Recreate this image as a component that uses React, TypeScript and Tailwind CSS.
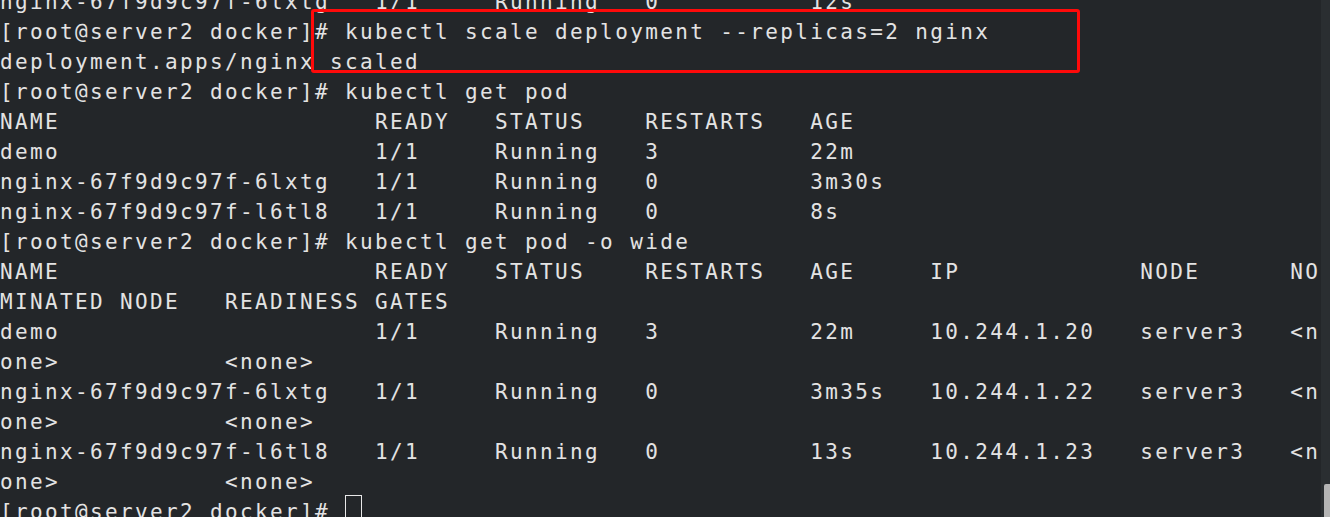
import React from "react";

const PROMPT = "[root@server2 docker]# ";

function row(cols: Array<[string, number]>) {
  // each entry: text, column width
  return cols.map(([t, w]) => (w > 0 ? t.padEnd(w, " ") : t)).join("");
}

const podRow = (name: string, restarts: string, age: string) =>
  row([
    [name, 25],
    ["1/1", 8],
    ["Running", 10],
    [restarts, 11],
    [age, 0],
  ]);

const wideRow = (name: string, restarts: string, age: string, ip: string) =>
  row([
    [name, 25],
    ["1/1", 8],
    ["Running", 10],
    [restarts, 11],
    [age, 8],
    [ip, 14],
    ["server3", 10],
    ["<n", 0],
  ]);

const lines: string[] = [
  podRow("nginx-67f9d9c97f-6lxtg", "0", "12s"),
  PROMPT + "kubectl scale deployment --replicas=2 nginx",
  "deployment.apps/nginx scaled",
  PROMPT + "kubectl get pod",
  row([["NAME", 25], ["READY", 8], ["STATUS", 10], ["RESTARTS", 11], ["AGE", 0]]),
  podRow("demo", "3", "22m"),
  podRow("nginx-67f9d9c97f-6lxtg", "0", "3m30s"),
  podRow("nginx-67f9d9c97f-l6tl8", "0", "8s"),
  PROMPT + "kubectl get pod -o wide",
  row([
    ["NAME", 25],
    ["READY", 8],
    ["STATUS", 10],
    ["RESTARTS", 11],
    ["AGE", 8],
    ["IP", 14],
    ["NODE", 10],
    ["NO", 0],
  ]),
  "MINATED NODE   READINESS GATES",
  wideRow("demo", "3", "22m", "10.244.1.20"),
  "one>           <none>",
  wideRow("nginx-67f9d9c97f-6lxtg", "0", "3m35s", "10.244.1.22"),
  "one>           <none>",
  wideRow("nginx-67f9d9c97f-l6tl8", "0", "13s", "10.244.1.23"),
  "one>           <none>",
];

export default function App() {
  return (
    <div className="relative flex h-[517px] w-[1330px] overflow-hidden bg-[#232629]">
      {/* Terminal output */}
      <div className="flex-1 overflow-hidden">
        <div
          className="-mt-[13px] whitespace-pre text-[21px] leading-[30px] tracking-[2.36px] text-[#e3e3e3]"
          style={{ fontFamily: '"DejaVu Sans Mono", monospace' }}
        >
          {lines.map((l, i) => (
            <div key={i}>{l}</div>
          ))}
          <div className="flex items-start">
            <span>{PROMPT.trimEnd()}</span>
            <span className="w-[15px]" />
            <span className="mt-[-2px] h-[34px] w-[17px] border border-[#e8e8e8]" />
          </div>
        </div>
      </div>

      {/* Scrollbar */}
      <div className="relative flex w-[9px] flex-col justify-end bg-[#2a2e31]">
        <div className="ml-[3px] h-[33px] w-[6px] rounded-tl-[2px] bg-[#b4b4b4]" />
      </div>

      {/* Red highlight annotation */}
      <div className="absolute left-[311px] top-[9px] h-[64px] w-[769px] rounded-[3px] border-[3px] border-[#ff0a0a]" />
    </div>
  );
}
